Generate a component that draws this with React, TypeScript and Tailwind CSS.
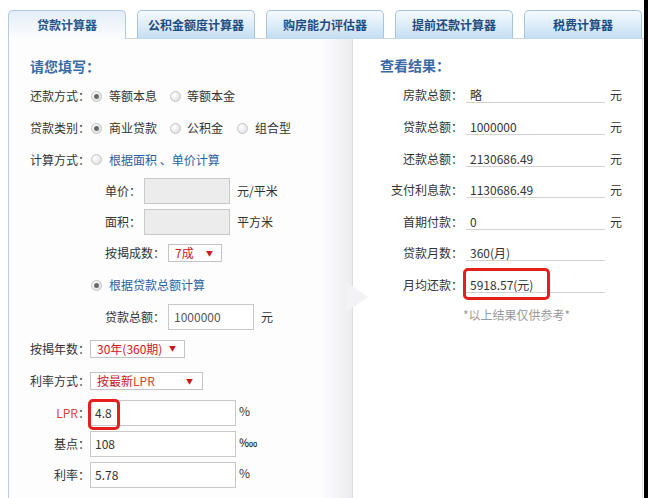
import React from "react";

function Radio({ checked }: { checked?: boolean }) {
  return (
    <span className="w-[11px] h-[11px] rounded-full border border-[#c4c4c4] bg-[radial-gradient(circle_at_35%_35%,#ffffff,#d9d9d9)] flex items-center justify-center shrink-0">
      {checked && <span className="w-[5px] h-[5px] rounded-full bg-[#6a6a6a]" />}
    </span>
  );
}

function Tab({ label, active }: { label: string; active?: boolean }) {
  if (active) {
    return (
      <div className="w-[118px] h-[29px] -mb-px relative z-10 rounded-t-[5px] border border-b-0 border-[#b3cbe0] bg-[linear-gradient(to_bottom,#e3eef8,#fdfdfe)] flex items-center justify-center text-[12px] font-bold text-[#2a5688]">
        {label}
      </div>
    );
  }
  return (
    <div className="w-[118px] h-[28px] rounded-t-[5px] border border-b-0 border-[#a7c4dd] bg-[linear-gradient(to_bottom,#f6fafd,#d9eaf7_60%,#c4def3)] flex items-center justify-center text-[12px] font-bold text-[#1f4c80]">
      {label}
    </div>
  );
}

function Sel({ w, children }: { w: string; children: React.ReactNode }) {
  return (
    <div className={`${w} h-[18px] border border-[#c4c4c4] bg-white flex items-center justify-between pl-[6px] pr-[8px] text-[12px] leading-none`}>
      <span className="text-[#d0141e]">{children}</span>
      <span className="text-[7px] text-[#d0141e]">▼</span>
    </div>
  );
}

function ResultRow({ label, value, unit, h, boxed }: { label: string; value: string; unit?: boolean; h: string; boxed?: boolean }) {
  return (
    <div className={`${h} flex items-center`}>
      <div className="w-[110px] text-right text-[12px] text-[#333]">{label}：</div>
      <div className="ml-[3px] w-[139px] h-[16px] leading-[16px] border-b border-[#d2d2d2] pl-[4px] text-[12px] text-[#333] relative">
        {value}
        {boxed && <div className="absolute left-[-3px] top-[-9px] w-[87px] h-[32px] border-[3px] border-[#e3201b] rounded-[5px]" />}
      </div>
      {unit && <div className="ml-[5px] text-[12px] text-[#333]">元</div>}
    </div>
  );
}

export default function App() {
  return (
    <div className="w-[648px] h-[498px] flex bg-white overflow-hidden font-['Noto_Sans_CJK_SC',sans-serif] text-[#333]">
      <div className="w-[644px] flex flex-col">
        <div className="h-[38px] flex items-end pl-[8px] gap-[11px] shrink-0">
          <Tab label="贷款计算器" active />
          <Tab label="公积金额度计算器" />
          <Tab label="购房能力评估器" />
          <Tab label="提前还款计算器" />
          <Tab label="税费计算器" />
        </div>
        <div className="flex-1 flex ml-[8px] border-t border-[#c9d5e0]">
          {/* left panel */}
          <div className="w-[344px] border-l border-[#b7cde1] bg-[linear-gradient(to_right,#fdfdfe_0%,#fdfdfe_91%,#ececf0_100%)] pl-[21px] pt-[13px] text-[12px]">
            <div className="h-[28px] flex items-center text-[14px] font-bold text-[#3a6aa6]">请您填写：</div>
            <div className="h-[32px] flex items-center">
              <span className="w-[60px]">还款方式：</span>
              <span className="ml-[1px]"><Radio checked /></span>
              <span className="ml-[7px]">等额本息</span>
              <span className="ml-[13px]"><Radio /></span>
              <span className="ml-[6px]">等额本金</span>
            </div>
            <div className="h-[32px] flex items-center">
              <span className="w-[60px]">贷款类别：</span>
              <span className="ml-[1px]"><Radio checked /></span>
              <span className="ml-[7px]">商业贷款</span>
              <span className="ml-[13px]"><Radio /></span>
              <span className="ml-[6px]">公积金</span>
              <span className="ml-[14px]"><Radio /></span>
              <span className="ml-[7px]">组合型</span>
            </div>
            <div className="h-[31px] flex items-center">
              <span className="w-[60px]">计算方式：</span>
              <span className="ml-[1px]"><Radio /></span>
              <span className="ml-[7px] text-[#2a61a0]">根据面积 、单价计算</span>
            </div>
            <div className="h-[31px] flex items-center pl-[75px]">
              <span className="w-[36px]">单价：</span>
              <div className="ml-[3px] w-[86px] h-[26px] border border-[#c8c8c8] bg-[#ececec]" />
              <span className="ml-[7px]">元/平米</span>
            </div>
            <div className="h-[31px] flex items-center pl-[75px]">
              <span className="w-[36px]">面积：</span>
              <div className="ml-[3px] w-[86px] h-[26px] border border-[#c8c8c8] bg-[#ececec]" />
              <span className="ml-[7px]">平方米</span>
            </div>
            <div className="h-[32px] flex items-center pl-[75px]">
              <span className="w-[60px]">按揭成数：</span>
              <span className="ml-[3px]"><Sel w="w-[54px]">7成</Sel></span>
            </div>
            <div className="h-[32px] flex items-center pl-[61px]">
              <Radio checked />
              <span className="ml-[7px] text-[#2a61a0]">根据贷款总额计算</span>
            </div>
            <div className="h-[31px] flex items-center pl-[75px]">
              <span className="w-[60px]">贷款总额：</span>
              <div className="ml-[3px] w-[86px] h-[26px] border border-[#c8c8c8] bg-white flex items-center pl-[5px] text-[#555]">1000000</div>
              <span className="ml-[7px]">元</span>
            </div>
            <div className="h-[33px] flex items-center">
              <span className="w-[60px]">按揭年数：</span>
              <Sel w="w-[95px]">30年(360期)</Sel>
            </div>
            <div className="h-[32px] flex items-center">
              <span className="w-[60px]">利率方式：</span>
              <div className="w-[113px] h-[18px] border border-[#c4c4c4] bg-white flex items-center justify-between pl-[6px] pr-[9px] leading-none">
                <span className="text-[#d0141e]">按最新<span className="text-[#d2451f]">LPR</span></span>
                <span className="text-[7px] text-[#d0141e]">▼</span>
              </div>
            </div>
            <div className="h-[31px] flex items-center">
              <span className="w-[60px] text-right"><span className="text-[#d9473a]">LPR</span>：</span>
              <div className="w-[146px] h-[26px] border border-[#c8c8c8] bg-white flex items-center pl-[4px] relative">
                4.8
                <div className="absolute left-[-3px] top-[-2px] w-[32px] h-[31px] border-[3px] border-[#e3201b] rounded-[5px]" />
              </div>
              <span className="ml-[3px] self-start mt-[5px]">%</span>
            </div>
            <div className="h-[31px] flex items-center">
              <span className="w-[60px] text-right">基点：</span>
              <div className="w-[146px] h-[26px] border border-[#c8c8c8] bg-white flex items-center pl-[4px]">108</div>
              <span className="ml-[3px] self-start mt-[5px]">‱</span>
            </div>
            <div className="h-[31px] flex items-center">
              <span className="w-[60px] text-right">利率：</span>
              <div className="w-[146px] h-[26px] border border-[#c8c8c8] bg-white flex items-center pl-[4px]">5.78</div>
              <span className="ml-[3px] self-start mt-[5px]">%</span>
            </div>
          </div>
          {/* right panel */}
          <div className="w-[291px] border-l border-r border-[#dcdde2] bg-white relative pt-[12px]">
            <svg className="absolute left-[-7px] top-[243px]" width="24" height="32" viewBox="0 0 24 32">
              <polygon points="0,0 22,15 0,30" fill="#f3f3f6" />
            </svg>
            <div className="h-[28px] flex items-center pl-[27px] text-[14px] font-bold text-[#3a6aa6]">查看结果：</div>
            <ResultRow h="h-[32px]" label="房款总额" value="略" unit />
            <ResultRow h="h-[32px]" label="贷款总额" value="1000000" unit />
            <ResultRow h="h-[31px]" label="还款总额" value="2130686.49" unit />
            <ResultRow h="h-[32px]" label="支付利息款" value="1130686.49" unit />
            <ResultRow h="h-[31px]" label="首期付款" value="0" unit />
            <ResultRow h="h-[32px]" label="贷款月数" value="360(月)" />
            <ResultRow h="h-[31px]" label="月均还款" value="5918.57(元)" boxed />
            <div className="h-[30px] flex items-center pl-[110px] text-[12px] text-[#9a9a9a]">*以上结果仅供参考*</div>
          </div>
        </div>
      </div>
      <div className="w-[4px] bg-black" />
    </div>
  );
}
